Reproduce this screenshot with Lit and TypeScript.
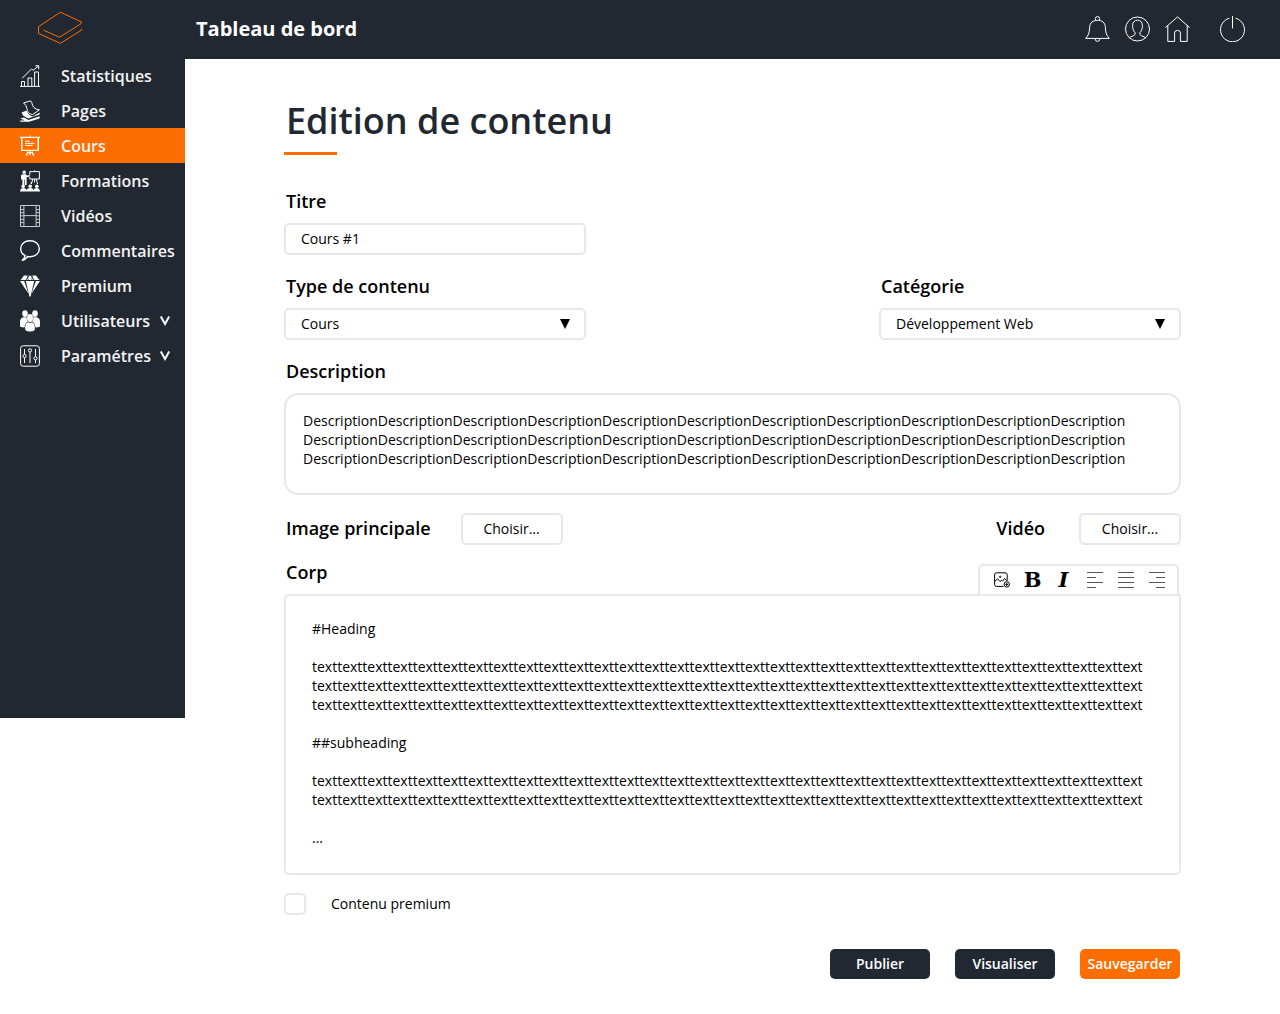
import { LitElement, html, svg, css, nothing, type TemplateResult, type SVGTemplateResult } from "lit";
import { customElement, state } from "lit/decorators.js";

interface NavItem {
  label: string;
  icon: SVGTemplateResult;
  expandable?: boolean;
}

const NAV: NavItem[] = [
  {
    label: "Statistiques",
    icon: svg`
      <path d="M0 21.4H20M1.5 21V16.5H4.5V21M8 21V13H11.8V21M14.6 21V7H18.5V21"/>
      <path d="M2.3 13.2L11.6 3.8L13.2 5.4L18.3 1M15.4 .8H18.7V4.2"/>`,
  },
  {
    label: "Pages",
    icon: svg`
      <path d="M3.6 3L10.6 .8C12.6 2.6 11.6 5 14 7.6Q16 9.6 19.4 9.8L12.6 14.6C8.4 14 7.6 11.4 7 8.6Q6.4 5 3.6 3Z"/>
      <path class="solid" d="M6.6 10.6L1.6 12.6L3 15.4L8 18.4L19.6 14.4V12.4L12.8 16.6Q8.4 15.4 6.6 10.6Z"/>
      <path class="solid" d="M.2 18.6L4 17.4L8.4 20L19.6 16.2V18.4L9 21.8H.4L.2 20.4H5Z"/>`,
  },
  {
    label: "Cours",
    icon: svg`
      <path class="bold" d="M0 2.4H20M1.8 3V15.4H18.2V3"/>
      <path d="M10 .4V2M5 6.2H9.6M5 8.3H14.6M5 10.4H12.8"/>
      <path class="bold" d="M8.2 16.6L6.2 20.8M11.8 16.6L13.8 20.8M10 16V20"/>
      <path d="M8 17.6H12"/>`,
  },
  {
    label: "Formations",
    icon: svg`
      <circle class="solid" cx="4.2" cy="2.3" r="1.7"/>
      <path class="solid" d="M1 5L3 4.2H5.8L7 5.4L9.8 5V6.4L6.6 7.2V15H4.8V9.6H4.2V15H2.4V9.6L1 9.4Z"/>
      <path d="M9.8 4.6V1.6H19.4V9H9.8V7.2M14.6 .4V1.6M12.8 9L11.4 14M14.6 9V12.4M16.2 9L17.6 14M11.4 12L10.8 13.6"/>
      <circle class="solid" cx="3.2" cy="16.2" r="1.8"/>
      <circle class="solid" cx="10.2" cy="16.2" r="1.8"/>
      <circle class="solid" cx="16.8" cy="16.2" r="1.8"/>
      <path class="solid" d="M0 21.6Q.2 18 3.2 18T6.6 20Q7.4 18 10.2 18T13.4 20Q14 18 16.8 18T20 21.6Z"/>`,
  },
  {
    label: "Vidéos",
    icon: svg`
      <g class="soft"><path d="M.5 .5H19.5V21.5H.5ZM3.9 .5V21.5M16.1 .5V21.5M3.9 10.6H16.1"/>
      <path d="M.5 4.6H3.9M.5 7.6H3.9M.5 10.8H3.9M.5 14.4H3.9M.5 17.6H3.9M16.1 4.6H19.5M16.1 7.6H19.5M16.1 10.8H19.5M16.1 14.4H19.5M16.1 17.6H19.5"/></g>`,
  },
  {
    label: "Commentaires",
    icon: svg`
      <path class="bold" d="M5.2 15.6C2 14.2 .7 11.6 .7 8.8C.7 4.2 4.6 .8 10 .8S19.3 4.2 19.3 8.8S15.4 16.8 10 16.8Q8.6 16.8 7.6 16.5Q5.4 19.6 2 20.6Q4.6 18.2 5.2 15.6Z"/>`,
  },
  {
    label: "Premium",
    icon: svg`
      <path class="solid" d="M4 .4L8.6 .4L5.6 5H.6ZM9.4 .8H10.6L13.4 5H6.6ZM11.4 .4H16L19.4 5H14.4ZM0 6H4.2L8.4 18.6ZM5.8 6H14.2L10.6 21.4H9.4ZM15.8 6H20L11.6 18.6Z"/>
      <path class="cut" d="M7 .2L8.3 4.9M13 .2L11.7 4.9"/>`,
  },
  {
    label: "Utilisateurs",
    expandable: true,
    icon: svg`
      <ellipse class="solid" cx="5" cy="3.6" rx="2.8" ry="3.4"/>
      <ellipse class="solid" cx="15" cy="3.6" rx="2.8" ry="3.4"/>
      <path class="solid" d="M0 16.4V12Q0 7.6 3.6 7.2H6.6Q6.6 10.6 8 11.6Q4.6 13 4.6 17.4Q1.6 17.4 0 16.4ZM20 16.4V12Q20 7.6 16.4 7.2H13.4Q13.4 10.6 12 11.6Q15.4 13 15.4 17.4Q18.4 17.4 20 16.4Z"/>
      <ellipse class="solid" cx="10" cy="8" rx="3" ry="3.9"/>
      <path class="solid" d="M5.2 20V17Q5.2 12.6 8.4 12.2Q10 13.2 11.6 12.2Q14.8 12.6 14.8 17V20Q13 21.6 10 21.6T5.2 20Z"/>`,
  },
  {
    label: "Paramétres",
    expandable: true,
    icon: svg`
      <rect x=".6" y=".8" width="18.8" height="20.4" rx="2.6"/>
      <path d="M4.5 4V9.4M4.5 12.8V18M10 7V18M15.5 4V11.6M15.5 15V18"/>
      <circle cx="4.5" cy="11.1" r="1.6"/>
      <circle cx="10" cy="5.4" r="1.6"/>
      <circle cx="15.5" cy="13.3" r="1.6"/>`,
  },
];

const HEADER_ACTIONS: { label: string; icon: SVGTemplateResult }[] = [
  {
    label: "Notifications",
    icon: svg`
      <path d="M10.4 4.2V2.4Q10.4 .6 12.5 .6T14.6 2.4V4.2M10 22.6Q10.2 25.4 12.5 25.4T15 22.6"/>
      <path d="M.7 22.4C3.4 19.4 4.4 17 4.6 11.6C4.8 6.4 8 4.3 12.5 4.3S20.2 6.4 20.4 11.6C20.6 17 21.6 19.4 24.3 22.4Z"/>`,
  },
  {
    label: "Profil",
    icon: svg`
      <circle cx="12.5" cy="13" r="12"/>
      <path d="M4.4 21.8Q5.6 20.6 8.4 19.8Q10.6 19 10.2 16.8C8.2 14.6 7.6 12.6 7.6 9.6C7.6 6 9.6 4.2 12.5 4.2S17.4 6 17.4 9.6C17.4 12.6 16.8 14.6 14.8 16.8Q14.4 19 16.6 19.8Q19.4 20.6 20.6 21.8"/>`,
  },
  {
    label: "Accueil",
    icon: svg`
      <path d="M.4 11.6L12.5 .9L24.6 11.6"/>
      <path d="M2.8 9.6V25.4H9.6V16.8Q9.6 14.4 12.5 14.4T15.4 16.8V25.4H22.2V9.6"/>`,
  },
  {
    label: "Déconnexion",
    icon: svg`
      <path d="M9.4 2.2A12 12 0 1 0 15.6 2.2M12.5 0V12.4"/>`,
  },
];

const TOOLS: { label: string; glyph: TemplateResult }[] = [
  {
    label: "Insérer une image",
    glyph: html`<svg class="tool-icon" viewBox="0 0 16 16" aria-hidden="true">
      <path d="M9.4 14.4H2.6Q.6 14.4 .6 12.4V2.8Q.6 .8 2.6 .8H11.2Q13.2 .8 13.2 2.8V8.6"/>
      <path d="M.8 9.4L3.6 6.8L6 9.6L7.6 8.2L8.6 9.2L10.6 6.4L13 8.8"/>
      <circle cx="6.2" cy="4.8" r=".7"/>
      <circle cx="12.8" cy="12.4" r="2.7"/>
      <path d="M12.8 10.9V13.9M11.3 12.4H14.3"/>
    </svg>`,
  },
  { label: "Gras", glyph: html`<span class="glyph">B</span>` },
  { label: "Italique", glyph: html`<span class="glyph slanted">I</span>` },
  {
    label: "Aligner à gauche",
    glyph: html`<svg class="tool-icon lines" viewBox="0 0 16 16" aria-hidden="true"><path d="M0 .5H16M0 5.5H9M0 10.5H16M0 15.5H9"/></svg>`,
  },
  {
    label: "Justifier",
    glyph: html`<svg class="tool-icon lines" viewBox="0 0 16 16" aria-hidden="true"><path d="M0 .5H16M0 5.5H16M0 10.5H16M0 15.5H16"/></svg>`,
  },
  {
    label: "Aligner à droite",
    glyph: html`<svg class="tool-icon lines" viewBox="0 0 16 16" aria-hidden="true"><path d="M0 .5H16M7 5.5H16M0 10.5H16M7 15.5H16"/></svg>`,
  },
];

const DESCRIPTION = Array(3).fill("Description".repeat(11)).join("\n");
const TEXT_LINE = "text".repeat(33);
const BODY = [
  "#Heading", "", TEXT_LINE, TEXT_LINE, TEXT_LINE, "",
  "##subheading", "", TEXT_LINE, TEXT_LINE, "", "...",
].join("\n");

@customElement("side-nav")
export class SideNav extends LitElement {
  @state() private current = "Cours";

  static styles = css`
    :host {
      display: block;
      background: #222831;
      color: #f3f3f3;
    }
    .brand {
      display: flex;
      align-items: center;
      height: 58px;
      padding: 0 0 2px 38px;
      box-sizing: border-box;
    }
    .logo {
      width: 44px;
      height: 34px;
      fill: none;
      stroke: #fc6e00;
    }
    .list {
      list-style: none;
      margin: 0;
      padding: 0;
    }
    .link {
      display: flex;
      align-items: center;
      height: 35px;
      padding: 0 15px 0 20px;
      font-size: 16px;
      font-weight: 600;
      color: inherit;
      text-decoration: none;
      white-space: nowrap;
    }
    .link.active {
      background: #fc6e00;
    }
    .icon {
      flex: none;
      width: 20px;
      height: 22px;
      margin-right: 21px;
      fill: none;
      stroke: #fff;
      stroke-width: 1;
    }
    .icon .bold {
      stroke-width: 1.4;
    }
    .icon .soft {
      stroke: #c8cacd;
    }
    .icon .solid {
      fill: #fff;
      stroke: none;
    }
    .icon .cut {
      stroke: #222831;
      stroke-width: 0.7;
    }
    .chevron {
      width: 10px;
      height: 10px;
      margin-left: auto;
      overflow: visible;
      fill: none;
      stroke: #fff;
      stroke-width: 2;
    }
  `;

  render() {
    return html`
      <div class="brand">
        <svg class="logo" viewBox="0 0 44 34" aria-hidden="true">
          <path d="M5.6 19.2L21.6 26.2L43.2 12.6V10.8L22.4 1.2L.5 15.6V22.4L22.4 32.4L43.6 19V17.6" />
        </svg>
      </div>
      <nav aria-label="Navigation principale">
        <ul class="list">
          ${NAV.map(
            (item) => html`<li>
              <a
                class="link ${item.label === this.current ? "active" : ""}"
                href="#"
                aria-current=${item.label === this.current ? "page" : nothing}
                @click=${() => (this.current = item.label)}
              >
                <svg class="icon" viewBox="0 0 20 22" aria-hidden="true">${item.icon}</svg>
                ${item.label}
                ${item.expandable
                  ? html`<svg class="chevron" viewBox="0 0 10 10" aria-hidden="true"><path d="M.8 .4L5 8L9.2 .4" /></svg>`
                  : nothing}
              </a>
            </li>`
          )}
        </ul>
      </nav>
    `;
  }
}

@customElement("top-bar")
export class TopBar extends LitElement {
  static styles = css`
    :host {
      display: flex;
      align-items: center;
      justify-content: space-between;
      height: 59px;
      padding: 0 35px 1px 11px;
      box-sizing: border-box;
      background: #222831;
      color: #fff;
    }
    .title {
      padding-bottom: 2px;
      font-size: 20px;
      font-weight: 700;
    }
    .actions {
      display: flex;
      gap: 15px;
    }
    .action {
      display: block;
      padding: 0;
      border: 0;
      background: none;
      cursor: pointer;
    }
    .action:last-child {
      margin-left: 15px;
    }
    .icon {
      display: block;
      width: 25px;
      height: 26px;
      fill: none;
      stroke: #fff;
      stroke-width: 1;
    }
  `;

  render() {
    return html`
      <span class="title">Tableau de bord</span>
      <div class="actions">
        ${HEADER_ACTIONS.map(
          (a) => html`<button class="action" type="button" aria-label=${a.label}>
            <svg class="icon" viewBox="0 0 25 26" aria-hidden="true">${a.icon}</svg>
          </button>`
        )}
      </div>
    `;
  }
}

@customElement("content-form")
export class ContentForm extends LitElement {
  static styles = css`
    :host {
      display: block;
      padding: 37px 99px 35px;
      color: #000;
    }
    .heading {
      margin: 0;
      padding-left: 2px;
      font-size: 36px;
      line-height: 49px;
      font-weight: 600;
      color: #222831;
    }
    .rule {
      width: 53px;
      height: 3px;
      margin: 7px 0 34px;
      background: #fc6e00;
    }
    .label {
      display: block;
      padding-left: 2px;
      font-size: 18px;
      line-height: 25px;
      font-weight: 600;
    }
    .field {
      display: flex;
      flex-direction: column;
      gap: 9px;
      width: 302px;
    }
    .field.wide {
      width: auto;
    }
    .row {
      display: flex;
      justify-content: space-between;
      margin: 19px 0;
    }
    .row.files {
      margin: 18px 0 15px;
    }
    .input,
    .area,
    .choose {
      box-sizing: border-box;
      margin: 0;
      border: 2px solid #e8e8e8;
      border-radius: 5px;
      background: #fff;
      color: #000;
      font: inherit;
      font-size: 14px;
      line-height: 19px;
    }
    .input {
      width: 100%;
      height: 32px;
      padding: 0 15px 2px;
      appearance: none;
    }
    .select {
      display: grid;
      align-items: center;
    }
    .select > * {
      grid-area: 1 / 1;
    }
    .arrow {
      justify-self: end;
      width: 10px;
      height: 10px;
      margin-right: 16px;
      pointer-events: none;
    }
    .area {
      display: block;
      width: 100%;
      resize: none;
      overflow: hidden;
      white-space: pre;
    }
    .description {
      height: 102px;
      padding: 16px 17px;
      border-radius: 14px;
    }
    .body {
      height: 281px;
      padding: 23px 26px;
      border-top-right-radius: 0;
    }
    .media {
      display: flex;
      align-items: center;
    }
    .media .label {
      padding-bottom: 2px;
    }
    .media.first {
      gap: 30px;
    }
    .media.second {
      gap: 34px;
    }
    .choose {
      width: 102px;
      height: 32px;
      padding: 0 0 2px;
      cursor: pointer;
    }
    .body-head {
      display: flex;
      justify-content: space-between;
      align-items: flex-end;
    }
    .body-head .label {
      padding-bottom: 9px;
    }
    .tools {
      display: flex;
      height: 30px;
      padding: 0 5px 0 6px;
      margin-right: 2px;
      box-sizing: border-box;
      border: 2px solid #e8e8e8;
      border-bottom: 0;
      border-radius: 5px 5px 0 0;
    }
    .tool {
      display: flex;
      align-items: center;
      justify-content: center;
      width: 31px;
      padding: 0;
      border: 0;
      background: none;
      color: #000;
      cursor: pointer;
    }
    .tool-icon {
      width: 16px;
      height: 16px;
      fill: none;
      stroke: #000;
      stroke-width: 1;
    }
    .lines {
      stroke: #555;
    }
    .glyph {
      font: bold 21px/28px "DejaVu Serif", serif;
    }
    .slanted {
      font-style: italic;
    }
    .premium {
      display: flex;
      align-items: center;
      gap: 25px;
      margin: 18px 0 34px;
      font-size: 14px;
      line-height: 19px;
    }
    .premium label {
      padding-bottom: 2px;
    }
    .check {
      appearance: none;
      box-sizing: border-box;
      width: 22px;
      height: 22px;
      margin: 0;
      border: 2px solid #e8e8e8;
      border-radius: 5px;
      background: #fff;
    }
    .check:checked {
      background: #fc6e00;
    }
    .buttons {
      display: flex;
      justify-content: flex-end;
      gap: 25px;
      padding-right: 1px;
    }
    .button {
      width: 100px;
      height: 30px;
      padding: 0 0 1px;
      border: 0;
      border-radius: 5px;
      background: #222831;
      color: #fff;
      font: inherit;
      font-size: 14px;
      font-weight: 600;
      cursor: pointer;
    }
    .button.primary {
      background: #fc6e00;
    }
  `;

  private select(id: string, label: string, options: string[]) {
    return html`<div class="field">
      <label class="label" for=${id}>${label}</label>
      <div class="select">
        <select class="input" id=${id}>
          ${options.map((o) => html`<option>${o}</option>`)}
        </select>
        <svg class="arrow" viewBox="0 0 10 10" aria-hidden="true"><path d="M0 0H10L5 10Z" /></svg>
      </div>
    </div>`;
  }

  render() {
    return html`
      <h1 class="heading">Edition de contenu</h1>
      <div class="rule"></div>
      <form @submit=${(e: Event) => e.preventDefault()}>
        <div class="field">
          <label class="label" for="title">Titre</label>
          <input class="input" id="title" type="text" .value=${"Cours #1"} />
        </div>
        <div class="row">
          ${this.select("type", "Type de contenu", ["Cours"])}
          ${this.select("category", "Catégorie", ["Développement Web"])}
        </div>
        <div class="field wide">
          <label class="label" for="description">Description</label>
          <textarea class="area description" id="description" spellcheck="false" .value=${DESCRIPTION}></textarea>
        </div>
        <div class="row files">
          <div class="media first">
            <label class="label" for="image">Image principale</label>
            <button class="choose" id="image" type="button">Choisir...</button>
          </div>
          <div class="media second">
            <label class="label" for="video">Vidéo</label>
            <button class="choose" id="video" type="button">Choisir...</button>
          </div>
        </div>
        <div class="body-head">
          <label class="label" for="body">Corp</label>
          <div class="tools" role="toolbar" aria-label="Mise en forme">
            ${TOOLS.map((t) => html`<button class="tool" type="button" aria-label=${t.label}>${t.glyph}</button>`)}
          </div>
        </div>
        <textarea class="area body" id="body" spellcheck="false" .value=${BODY}></textarea>
        <div class="premium">
          <input class="check" id="premium" type="checkbox" />
          <label for="premium">Contenu premium</label>
        </div>
        <div class="buttons">
          <button class="button" type="button">Publier</button>
          <button class="button" type="button">Visualiser</button>
          <button class="button primary" type="submit">Sauvegarder</button>
        </div>
      </form>
    `;
  }
}

@customElement("app-root")
export class AppRoot extends LitElement {
  static styles = css`
    :host {
      display: grid;
      grid-template-columns: 185px minmax(0, 1fr);
      align-items: start;
      min-height: 100vh;
      background: #fff;
      font-family: "Open Sans", "Noto Sans", sans-serif;
    }
    .side {
      min-height: 718px;
    }
  `;

  render() {
    return html`
      <side-nav class="side"></side-nav>
      <div>
        <top-bar></top-bar>
        <main><content-form></content-form></main>
      </div>
    `;
  }
}
